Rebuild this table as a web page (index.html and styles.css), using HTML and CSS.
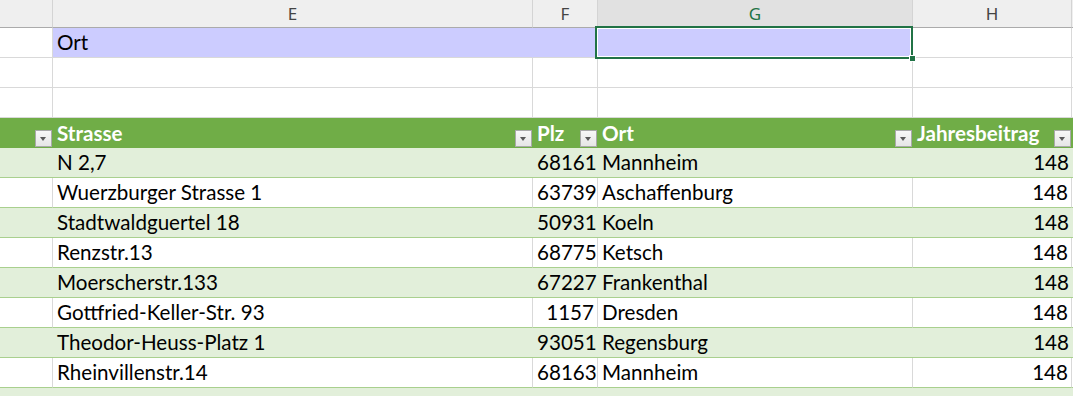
FILE: index.html
```html
<!DOCTYPE html>
<html lang="de">
<head>
<meta charset="utf-8">
<title>Mitglieder</title>
<link rel="stylesheet" href="styles.css">
</head>
<body>
<div class="sheet">
  <div class="ch"></div>
  <div class="ch">E</div>
  <div class="ch">F</div>
  <div class="ch sel">G</div>
  <div class="ch">H</div>
  <div class="ch end"></div>

  <div class="c"></div>
  <div class="c lav">Ort</div>
  <div class="c lav"></div>
  <div class="c lav active"><span class="handle"></span></div>
  <div class="c"></div>
  <div class="c end"></div>

  <div class="c"></div><div class="c"></div><div class="c"></div><div class="c"></div><div class="c"></div><div class="c end"></div>
  <div class="c"></div><div class="c"></div><div class="c"></div><div class="c"></div><div class="c"></div><div class="c end"></div>

  <div class="th"><span class="fb"></span></div>
  <div class="th">Strasse<span class="fb"></span></div>
  <div class="th">Plz<span class="fb"></span></div>
  <div class="th">Ort<span class="fb"></span></div>
  <div class="th">Jahresbeitrag<span class="fb"></span></div>
  <div class="th end"></div>

  <div class="td g"></div><div class="td g">N 2,7</div><div class="td g num">68161</div><div class="td g">Mannheim</div><div class="td g num">148</div><div class="td g end"></div>
  <div class="td w"></div><div class="td w">Wuerzburger Strasse 1</div><div class="td w num">63739</div><div class="td w">Aschaffenburg</div><div class="td w num">148</div><div class="td w end"></div>
  <div class="td g"></div><div class="td g">Stadtwaldguertel 18</div><div class="td g num">50931</div><div class="td g">Koeln</div><div class="td g num">148</div><div class="td g end"></div>
  <div class="td w"></div><div class="td w">Renzstr.13</div><div class="td w num">68775</div><div class="td w">Ketsch</div><div class="td w num">148</div><div class="td w end"></div>
  <div class="td g"></div><div class="td g">Moerscherstr.133</div><div class="td g num">67227</div><div class="td g">Frankenthal</div><div class="td g num">148</div><div class="td g end"></div>
  <div class="td w"></div><div class="td w">Gottfried-Keller-Str. 93</div><div class="td w num">1157</div><div class="td w">Dresden</div><div class="td w num">148</div><div class="td w end"></div>
  <div class="td g"></div><div class="td g">Theodor-Heuss-Platz 1</div><div class="td g num">93051</div><div class="td g">Regensburg</div><div class="td g num">148</div><div class="td g end"></div>
  <div class="td w"></div><div class="td w">Rheinvillenstr.14</div><div class="td w num">68163</div><div class="td w">Mannheim</div><div class="td w num">148</div><div class="td w end"></div>
  <div class="td g"></div><div class="td g"></div><div class="td g num"></div><div class="td g"></div><div class="td g num"></div><div class="td g end"></div>
</div>
</body>
</html>
```
FILE: styles.css
```css
* { box-sizing: border-box; }
html, body { margin: 0; padding: 0; background: #fff; overflow: hidden; }
body { width: 1073px; height: 396px; }

.sheet {
  display: grid;
  height: 396px;
  overflow: hidden;
  grid-template-columns: 53px 480px 65px 315px 159px 1fr;
  grid-template-rows: 28px;
  grid-auto-rows: 30px;
  font-family: "Lato", "Liberation Sans", sans-serif;
  font-size: 20.6px;
  color: #000;
}

.ch {
  background: #efefef;
  border-right: 1px solid #d4d4d4;
  border-bottom: 1px solid #ababab;
  font-family: "Noto Sans", sans-serif;
  font-size: 17px;
  color: #444;
  text-align: center;
  line-height: 27px;
}
.ch.sel { background: #e1e1e1; color: #217346; }

.c {
  border-right: 1px solid #d9d9d9;
  border-bottom: 1px solid #d9d9d9;
  line-height: 29px;
  padding-left: 4px;
  white-space: nowrap;
}
.c.lav { background: #ccccff; border-right-color: #ccccff; }
.c.active { position: relative; border-bottom-color: #ccccff; }
.c.active::before {
  content: "";
  position: absolute;
  left: -3px; top: -2px; right: -1px; bottom: -2px;
  border: 2px solid #217346;
  box-shadow: inset 0 0 0 1px #fff;
}
.handle {
  position: absolute;
  right: -4px; bottom: -5px;
  width: 7px; height: 7px;
  background: #217346;
  border: 1px solid #fff;
  z-index: 2;
}

.th {
  position: relative;
  background: #70ad47;
  color: #fff;
  font-weight: bold;
  line-height: 30px;
  padding-left: 4px;
  white-space: nowrap;
}
.fb {
  position: absolute;
  right: 1px; bottom: 1px;
  width: 17px; height: 17px;
  background: linear-gradient(#f7f7f7, #e6e6e6);
  border: 1px solid #a9a9a9;
}
.fb::after {
  content: "";
  position: absolute;
  left: 4px; top: 6px;
  border-left: 3.5px solid transparent;
  border-right: 3.5px solid transparent;
  border-top: 4px solid #595959;
}

.td {
  line-height: 29px;
  padding: 0 4px;
  white-space: nowrap;
  border-bottom: 1px solid #a9d08e;
}
.td.g { background: #e2efda; }
.td.w { background: #fff; border-right: 1px solid #d9d9d9; }
.td.num { text-align: right; padding-right: 3px; }
.end { border-right: none; }
```
